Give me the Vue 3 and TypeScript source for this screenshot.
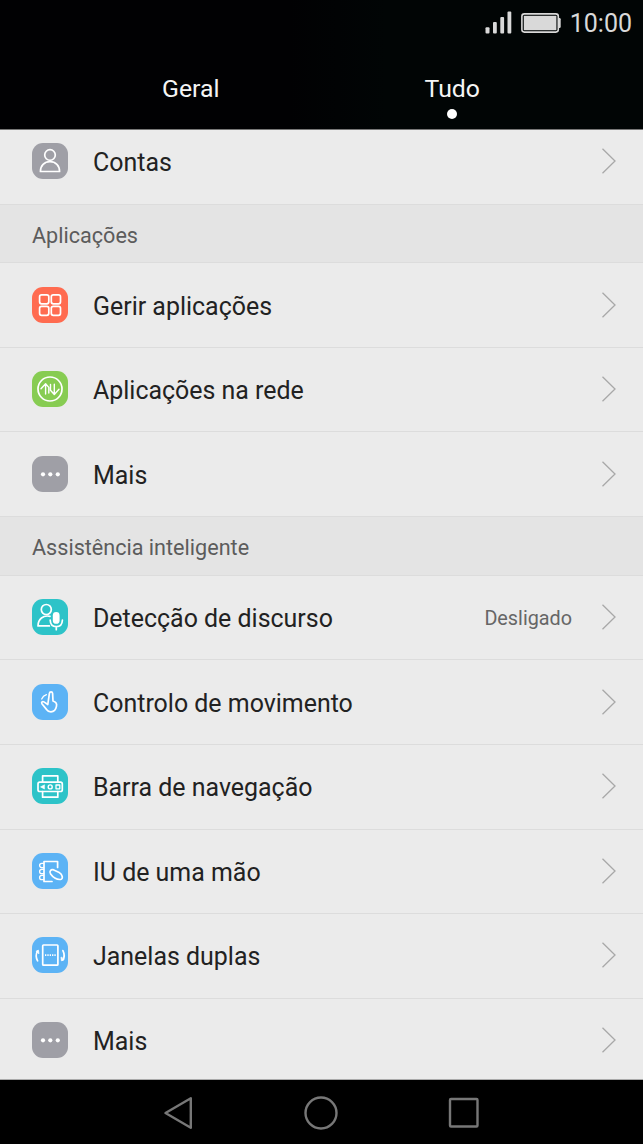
<script setup lang="ts">
interface Item {
  icon: string
  label: string
  value?: string
}

interface Group {
  title?: string
  items: Item[]
}

const tabs = ['Geral', 'Tudo']
const activeTab = 'Tudo'

const groups: Group[] = [
  { items: [{ icon: 'user', label: 'Contas' }] },
  {
    title: 'Aplicações',
    items: [
      { icon: 'apps', label: 'Gerir aplicações' },
      { icon: 'network', label: 'Aplicações na rede' },
      { icon: 'more', label: 'Mais' }
    ]
  },
  {
    title: 'Assistência inteligente',
    items: [
      { icon: 'voice', label: 'Detecção de discurso', value: 'Desligado' },
      { icon: 'motion', label: 'Controlo de movimento' },
      { icon: 'navbar', label: 'Barra de navegação' },
      { icon: 'onehand', label: 'IU de uma mão' },
      { icon: 'dual', label: 'Janelas duplas' },
      { icon: 'more', label: 'Mais' }
    ]
  }
]
</script>

<template>
  <div class="screen">
    <header class="header">
      <div class="status-bar">
        <svg class="signal" width="28" height="24" viewBox="0 0 28 24" fill="#d9d9d9">
          <rect x="0.500" y="16.300" width="4" height="6.200" rx="1" />
          <rect x="8" y="11" width="3.800" height="11.500" rx="1" />
          <rect x="15.300" y="6" width="3.800" height="16.500" rx="1" />
          <rect x="22.500" y="0.500" width="3.800" height="22" rx="1" />
        </svg>
        <svg class="battery" width="40" height="20" viewBox="0 0 40 20">
          <rect x="0.900" y="0.900" width="36.400" height="18.200" rx="2.500" fill="none" stroke="#d9d9d9" stroke-width="1.600" />
          <rect x="2.800" y="2.800" width="32.600" height="14.400" fill="#d9d9d9" />
          <path d="M37.500 5h1a1.200 1.200 0 0 1 1.200 1.200v7.600a1.200 1.200 0 0 1-1.200 1.200h-1z" fill="#d9d9d9" />
        </svg>
        <span class="time">10:00</span>
      </div>
      <nav class="tabs">
        <div v-for="tab in tabs" :key="tab" class="tab">
          <span>{{ tab }}</span>
          <i v-if="tab === activeTab" class="dot" />
        </div>
      </nav>
    </header>

    <main class="list">
      <section v-for="(group, i) in groups" :key="i" class="group">
        <h2 v-if="group.title" class="group-title">{{ group.title }}</h2>
        <div v-for="item in group.items" :key="item.label" class="row">
          <span class="icon" :class="item.icon">
            <svg width="36" height="36" viewBox="0 0 36 36" fill="none" stroke="#fff" stroke-width="1.700" stroke-linejoin="round" stroke-linecap="round">
              <g v-if="item.icon === 'user'">
                <circle cx="18" cy="12" r="5.300" />
                <path d="M8.400 28.500c0-5.800 4-9.800 9.600-9.800s9.600 4 9.600 9.800z" />
              </g>
              <g v-else-if="item.icon === 'apps'">
                <rect x="7.600" y="7.800" width="9.200" height="9" rx="2" />
                <rect x="19.300" y="7.800" width="9.200" height="9" rx="2" />
                <rect x="7.600" y="19.300" width="9.200" height="9" rx="2" />
                <rect x="19.300" y="19.300" width="9.200" height="9" rx="2" />
              </g>
              <g v-else-if="item.icon === 'network'">
                <circle cx="18" cy="18" r="12" />
                <path d="M9 17.800l4.600-5 3.200 3.600V22M13.600 13v10M18.500 13.500v5.700l3.800 4.300 4.700-5.200M22.300 13.300v10" stroke-width="1.400" />
              </g>
              <g v-else-if="item.icon === 'more'" fill="#fff" stroke="none">
                <circle cx="11" cy="18.300" r="2.100" />
                <circle cx="18.300" cy="18.300" r="2.100" />
                <circle cx="25.800" cy="18.300" r="2.100" />
              </g>
              <g v-else-if="item.icon === 'voice'">
                <circle cx="14.300" cy="10.500" r="5" />
                <path d="M18 17.300c-6.800-1.400-12 2.700-12 9.600h11.400" />
                <rect x="20.800" y="13" width="6.800" height="11.800" rx="3.400" fill="#fff" stroke="none" />
                <path d="M18.200 21.200c.2 4.200 2.500 6.500 6.100 6.500s5.900-2.300 6.100-6.500M24.300 28v2.700" />
              </g>
              <g v-else-if="item.icon === 'motion'">
                <path d="M15.800 20.500L17.400 9.300c.3-2 3-2 3.200 0L21 17c2.500.8 4 2.800 3.500 5.200-.6 3.300-2.600 5.600-5.600 5.600-2 0-3.400-1-4.400-2.400L9.900 19.700c-.8-1.400.6-2.700 2-1.800z" />
                <path d="M9.700 15c.8-2 2.500-3.600 4.700-4.300" stroke-width="1.300" />
              </g>
              <g v-else-if="item.icon === 'navbar'">
                <path d="M10.600 14V7.800h15.200V14M10.600 23.500v5.700h15.200v-5.700" />
                <rect x="6" y="14.200" width="24.300" height="9.300" rx="1.800" />
                <path d="M12.200 17l-3.600 1.900 3.600 1.900z" fill="#fff" stroke-width="0.700" />
                <circle cx="18.200" cy="18.900" r="2" stroke-width="1.400" />
                <rect x="24" y="17" width="3.800" height="3.800" stroke-width="1.300" />
              </g>
              <g v-else-if="item.icon === 'onehand'">
                <path d="M25.600 14.500V8.500H12v20h8" />
                <path d="M11.500 10.300H9.800a2.200 2.200 0 0 0 0 4.400h1.700M11.500 16.300H9.800a2.200 2.200 0 0 0 0 4.400h1.700M11.500 22.300H9.800a2.200 2.200 0 0 0 0 4.400h1.700" stroke-width="1.300" />
                <path d="M28.600 26.500c-4.600.3-7.600-2-10-5.400-1.800-2.600.2-5.200 3.200-4.200l5.400 2.500c3.400 1.700 4.200 6.800 1.400 7.100z" />
              </g>
              <g v-else-if="item.icon === 'dual'">
                <rect x="10.700" y="8" width="15.200" height="20.200" rx="0.800" />
                <path d="M13 18.200h10.700" stroke-width="1.800" stroke-dasharray="1.300 1.050" stroke-linecap="butt" />
                <path d="M5.600 23.800c-1.800-3.200-1.700-6.800-.1-9.600M30.900 23.200c1.800-3.200 1.600-6.500 0-9.600" />
                <path d="M4.300 14.200l2.200-1 .4 3.200zM32 22.300l-2.600 1.500-.3-3.400z" fill="#fff" stroke-width="0.800" />
              </g>
            </svg>
          </span>
          <span class="label">{{ item.label }}</span>
          <span v-if="item.value" class="value">{{ item.value }}</span>
          <svg class="chevron" width="16" height="28" viewBox="0 0 16 28" fill="none" stroke="#a8a8a8" stroke-width="1.300">
            <path d="M1.500 1.700L14 14 1.500 26.300" />
          </svg>
        </div>
      </section>
    </main>

    <footer class="nav-bar">
      <svg width="36" height="36" viewBox="0 0 36 36"><path d="M5.500 18L30.800 3.200v29.600z" /></svg>
      <svg width="36" height="36" viewBox="0 0 36 36"><circle cx="18" cy="18" r="15.500" /></svg>
      <svg width="36" height="36" viewBox="0 0 36 36"><rect x="4" y="4" width="27.500" height="27.500" rx="1" /></svg>
    </footer>
  </div>
</template>

<style>
body {
  margin: 0;
  background: #000;
}
</style>

<style scoped>
.screen {
  display: flex;
  flex-direction: column;
  width: 643px;
  height: 1144px;
  overflow: hidden;
  background: #000;
  font-family: Roboto, "Noto Sans", sans-serif;
}

.header {
  box-sizing: border-box;
  flex: none;
  height: 130px;
  border-bottom: 1px solid #777;
  background: linear-gradient(90deg, #010103 45%, #010505 60%);
  color: #f5f5f5;
}

.status-bar {
  display: flex;
  align-items: center;
  justify-content: flex-end;
  height: 46px;
  padding-right: 11px;
}

.battery {
  margin: 0 9px 0 8px;
}

.time {
  padding-top: 2px;
  color: #d9d9d9;
  font-size: 25px;
  line-height: 44px;
}

.tabs {
  display: flex;
  padding: 0 60px;
}

.tab {
  display: flex;
  flex: 1;
  flex-direction: column;
  align-items: center;
  padding-top: 28px;
  font-size: 24.8px;
  line-height: 30px;
}

.dot {
  width: 10px;
  height: 10px;
  margin-top: 5px;
  border-radius: 50%;
  background: #fff;
}

.list {
  flex: none;
  box-sizing: border-box;
  height: 950px;
  overflow: hidden;
  border-bottom: 1px solid #aaa;
  background: #ebebeb;
}

.group:first-child {
  margin-top: -10px;
}

.group-title {
  box-sizing: border-box;
  height: 58.7px;
  margin: 0;
  padding-left: 32px;
  border-bottom: 1px solid #dcdcdc;
  background: #e4e4e4;
  color: #5c5c5c;
  font-size: 21.6px;
  font-weight: 400;
  line-height: 61px;
}

.row {
  display: flex;
  align-items: center;
  box-sizing: border-box;
  height: 84.6px;
  padding: 0 26px 1px 32px;
  border-bottom: 1px solid #dcdcdc;
}

.icon {
  flex: none;
  width: 36px;
  height: 36px;
  border-radius: 11px;
  background: #5cb3f5;
}

.icon svg {
  display: block;
}

.icon.user,
.icon.more {
  background: #9f9fa6;
}

.icon.apps {
  background: #ff6b50;
}

.icon.network {
  background: #87cc52;
}

.icon.voice,
.icon.navbar {
  background: #2dc3c8;
}

.label {
  flex: 1;
  margin-left: 25px;
  padding-top: 4px;
  color: #222;
  font-size: 24.95px;
  line-height: 30px;
}

.value {
  margin-right: 29px;
  padding-top: 3px;
  color: #666;
  font-size: 19.8px;
}

.nav-bar {
  display: flex;
  flex: 1;
  align-items: center;
  justify-content: center;
  gap: 107px;
  padding: 1px 1px 0 0;
  background: #000;
}

.nav-bar svg {
  fill: none;
  stroke: #777;
  stroke-width: 2.4;
  stroke-linejoin: round;
}
</style>
